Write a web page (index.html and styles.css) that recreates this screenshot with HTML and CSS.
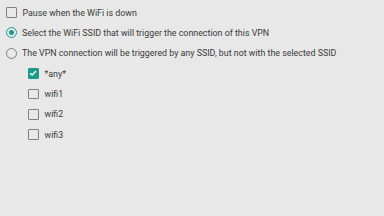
FILE: index.html
```html
<!DOCTYPE html>
<html>
<head>
<meta charset="utf-8">
<link rel="stylesheet" href="styles.css">
</head>
<body>
<div class="page">
  <div class="row"><span class="box"></span><span class="label">Pause when the WiFi is down</span></div>
  <div class="row"><span class="radio on"></span><span class="label">Select the WiFi SSID that will trigger the connection of this VPN</span></div>
  <div class="row"><span class="radio"></span><span class="label">The VPN connection will be triggered by any SSID, but not with the selected SSID</span></div>
  <div class="sub">
    <div class="row"><span class="box on"><svg viewBox="0 0 10 10" width="10" height="10"><path d="M2.2 5.2 L4.2 7.1 L8 3" fill="none" stroke="#fff" stroke-width="1.4"/></svg></span><span class="label">*any*</span></div>
    <div class="row"><span class="box"></span><span class="label">wifi1</span></div>
    <div class="row"><span class="box"></span><span class="label">wifi2</span></div>
    <div class="row"><span class="box"></span><span class="label">wifi3</span></div>
  </div>
</div>
</body>
</html>
```
FILE: styles.css
```css
html, body {
  margin: 0;
  padding: 0;
  background: #e8e8e8;
  width: 384px;
  height: 216px;
  overflow: hidden;
}
.page {
  padding: 2.5px 0 0 6px;
  font-family: Roboto, "Liberation Sans", sans-serif;
  font-size: 8.85px;
  color: #3a3a3a;
}
.row {
  height: 20.33px;
  display: flex;
  align-items: center;
}
.sub {
  padding-left: 22px;
}
.box {
  width: 10.5px;
  height: 10.5px;
  box-sizing: border-box;
  border: 1.5px solid #808080;
  border-radius: 1px;
  margin-right: 6px;
  flex: none;
  display: flex;
}
.box.on {
  background: #1c9a8c;
  border-color: #1c9a8c;
}
.box.on svg {
  margin: -1.5px;
}
.radio {
  width: 11px;
  height: 11px;
  box-sizing: border-box;
  border: 1.4px solid #808080;
  border-radius: 50%;
  margin-right: 5px;
  flex: none;
  display: flex;
  align-items: center;
  justify-content: center;
}
.radio.on {
  border-color: #1c9a8c;
}
.radio.on::after {
  content: "";
  width: 5px;
  height: 5px;
  border-radius: 50%;
  background: #1c9a8c;
}
.label {
  white-space: nowrap;
}
```
